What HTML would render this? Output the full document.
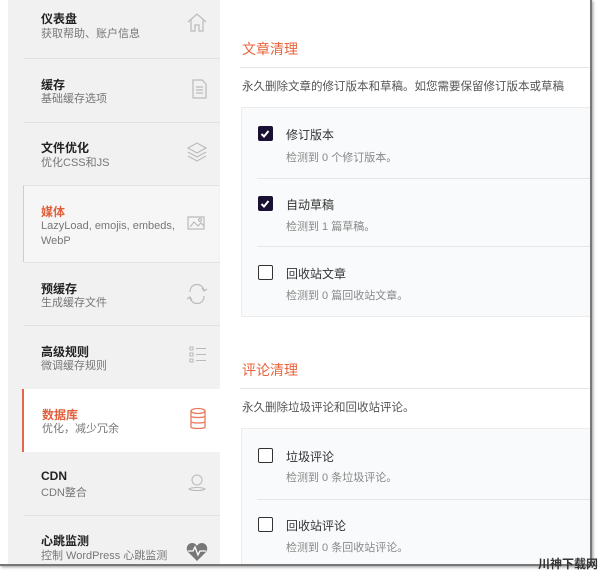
<!DOCTYPE html>
<html><head><meta charset="utf-8"><style>
*{margin:0;padding:0;box-sizing:border-box}
body{width:600px;height:572px;background:#fff;font-family:"Liberation Sans","Noto Sans CJK SC",sans-serif;position:relative;overflow:hidden}
.frame{position:absolute;left:0;top:0;width:592px;height:566px;background:#fff;border-right:2px solid #777;border-bottom:2px solid #777;box-shadow:1px 1px 3px #999;overflow:hidden}
.side{position:absolute;left:8px;top:0;width:212px;height:566px;background:#f1f1f1}
.it{position:absolute;left:16px;width:196px;border-top:1px solid #e2e2e2}
.it .t{position:absolute;left:17px;font-size:12px;font-weight:bold;color:#222}
.it .s{position:absolute;left:17px;font-size:11px;color:#777;line-height:15px;width:150px}
.it svg{position:absolute;right:12px}
.act{background:#fff;border-left:2px solid #e0694d;border-top:none}
.med{background:#f6f6f6;border-left:1px solid #f0c0b0}
.red{color:#e0603c!important}
.h{position:absolute;left:242px;font-size:14px;color:#e8643c}
.ln{position:absolute;left:240px;width:352px;height:1px;background:#e6e6e6}
.d{position:absolute;left:242px;font-size:11.5px;color:#555;white-space:nowrap}
.box{position:absolute;left:241px;width:352px;background:#f9fafb;border:1px solid #ececec}
.cb{position:absolute;left:16px;width:15px;height:15px;border:1.5px solid #333;border-radius:2px;background:#fff}
.cb.on{background:#1a1033;border-color:#1a1033}
.lb{position:absolute;left:44px;font-size:12px;color:#333}
.sb{position:absolute;left:44px;font-size:11px;color:#888}
.sp{position:absolute;left:15px;right:0;height:1px;background:#e6e6e6}
.wm{position:absolute;right:2px;bottom:0;font-size:12px;font-weight:bold;color:#333}
</style></head><body>
<div class="frame">
<div class="side">
<div class="it" style="top:-1px;height:59px;border-top:none"><div class="t" style="top:11px">仪表盘</div><div class="s" style="top:28px">获取帮助、账户信息</div>
<svg style="top:12px" width="22" height="22" viewBox="0 0 22 22" fill="none" stroke="#bbb" stroke-width="1.2"><path d="M2 11L11 3L20 11M5 9V20H9V14H13V20H17V9"/></svg></div>
<div class="it" style="top:58px;height:64px"><div class="t" style="top:17px">缓存</div><div class="s" style="top:33px">基础缓存选项</div>
<svg style="top:19px" width="18" height="22" viewBox="0 0 18 22" fill="none" stroke="#bbb" stroke-width="1.2"><path d="M3 2H12L16 6V20H3Z M6 9H13M6 12H13M6 15H13"/></svg></div>
<div class="it" style="top:122px;height:63px"><div class="t" style="top:16px">文件优化</div><div class="s" style="top:33px">优化CSS和JS</div>
<svg style="top:17px" width="22" height="24" viewBox="0 0 22 24" fill="none" stroke="#bbb" stroke-width="1.2"><path d="M11 3L20 8L11 13L2 8Z M2 12L11 17L20 12 M2 16L11 21L20 16"/></svg></div>
<div class="it med" style="top:185px;height:77px;left:15px"><div class="t red" style="top:17px">媒体</div><div class="s" style="top:33px;width:160px">LazyLoad, emojis, embeds, WebP</div>
<svg style="top:28px" width="22" height="18" viewBox="0 0 22 18" fill="none" stroke="#bbb" stroke-width="1.2"><path d="M3 3H19V15H3Z M5 13L9 8L13 12L16 9L19 12"/><circle cx="15" cy="6" r="1.5"/></svg></div>
<div class="it" style="top:262px;height:63px"><div class="t" style="top:17px">预缓存</div><div class="s" style="top:33px">生成缓存文件</div>
<svg style="top:20px" width="22" height="22" viewBox="0 0 22 22" fill="none" stroke="#bbb" stroke-width="1.2"><path d="M4 9A7 7 0 0 1 18 8M18 13A7 7 0 0 1 4 14M16 5L18 8L21 6M6 17L4 14L1 16"/></svg></div>
<div class="it" style="top:325px;height:64px"><div class="t" style="top:17px">高级规则</div><div class="s" style="top:33px">微调缓存规则</div>
<svg style="top:19px" width="20" height="20" viewBox="0 0 20 20" fill="none" stroke="#bbb" stroke-width="1.1"><path d="M2 2H5V5H2Z M2 8H5V11H2Z M2 14H5V17H2Z M8 3.5H18M8 9.5H18M8 15.5H18"/></svg></div>
<div class="it act" style="top:389px;height:63px;left:14px;width:198px"><div class="t red" style="top:17px;left:18px">数据库</div><div class="s" style="top:33px;left:18px">优化，减少冗余</div>
<svg style="top:18px" width="20" height="24" viewBox="0 0 20 24" fill="none" stroke="#e8795c" stroke-width="1.3"><ellipse cx="10" cy="4" rx="7" ry="2.5"/><path d="M3 4V20C3 22 17 22 17 20V4M3 9C3 11 17 11 17 9M3 14.5C3 16.5 17 16.5 17 14.5"/></svg></div>
<div class="it" style="top:452px;height:63px;border-top:none"><div class="t" style="top:17px">CDN</div><div class="s" style="top:34px">CDN整合</div>
<svg style="top:20px" width="22" height="22" viewBox="0 0 22 22" fill="none" stroke="#bbb" stroke-width="1.1"><circle cx="11" cy="8" r="5"/><path d="M3 17C6 15 16 15 19 17C16 19 6 19 3 17Z"/></svg></div>
<div class="it" style="top:515px;height:60px"><div class="t" style="top:16px">心跳监测</div><div class="s" style="top:33px;width:180px">控制 WordPress 心跳监测</div>
<svg style="top:26px" width="22" height="20" viewBox="0 0 22 20"><path d="M11 19L2 10C-1 6 2 1 6 1C8 1 10 2 11 4C12 2 14 1 16 1C20 1 23 6 20 10Z" fill="#777"/><path d="M2 9H7L9 5L12 13L14 9H20" stroke="#fff" stroke-width="1.3" fill="none"/></svg></div>
</div>

<div class="h" style="top:39px">文章清理</div>
<div class="ln" style="top:67px"></div>
<div class="d" style="top:78px">永久删除文章的修订版本和草稿。如您需要保留修订版本或草稿</div>
<div class="box" style="top:107px;height:210px">
<div class="cb on" style="top:18px"><svg width="12" height="12" viewBox="0 0 12 12"><path d="M2.5 6L5 8.5L9.5 3" stroke="#fff" stroke-width="2" fill="none"/></svg></div>
<div class="lb" style="top:18px">修订版本</div><div class="sb" style="top:41px">检测到 0 个修订版本。</div>
<div class="sp" style="top:70px"></div>
<div class="cb on" style="top:88px"><svg width="12" height="12" viewBox="0 0 12 12"><path d="M2.5 6L5 8.5L9.5 3" stroke="#fff" stroke-width="2" fill="none"/></svg></div>
<div class="lb" style="top:88px">自动草稿</div><div class="sb" style="top:110px">检测到 1 篇草稿。</div>
<div class="sp" style="top:138px"></div>
<div class="cb" style="top:157px"></div>
<div class="lb" style="top:157px">回收站文章</div><div class="sb" style="top:179px">检测到 0 篇回收站文章。</div>
</div>

<div class="h" style="top:360px">评论清理</div>
<div class="ln" style="top:388px"></div>
<div class="d" style="top:399px">永久删除垃圾评论和回收站评论。</div>
<div class="box" style="top:428px;height:150px">
<div class="cb" style="top:19px"></div>
<div class="lb" style="top:19px">垃圾评论</div><div class="sb" style="top:40px">检测到 0 条垃圾评论。</div>
<div class="sp" style="top:70px"></div>
<div class="cb" style="top:88px"></div>
<div class="lb" style="top:88px">回收站评论</div><div class="sb" style="top:110px">检测到 0 条回收站评论。</div>
</div>
</div>
<div class="wm">川神下载网</div>
</body></html>
